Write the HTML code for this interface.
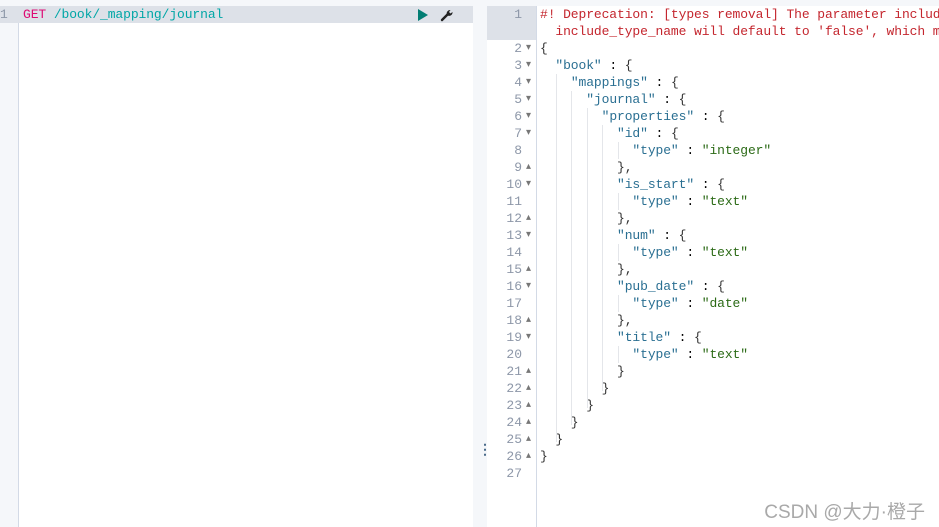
<!DOCTYPE html><html><head><style>
body{margin:0;width:939px;height:527px;background:#f5f7fa;position:relative;overflow:hidden;font-family:"Liberation Mono",monospace;font-size:13px}
.p{position:absolute;background:#fff}
.ln{position:absolute;color:#8d97a8;text-align:right;width:34px}
.c{position:absolute;white-space:pre;left:53px;letter-spacing:-0.1px}
.k{color:#2a6f92}.s{color:#2b6a16}.b{color:#333}.r{color:#c4262e}
.g{position:absolute;width:1px;background:#e4e6ea}
.a{font-size:10px;line-height:10px;color:#777;position:absolute;left:39px;font-family:"DejaVu Sans",sans-serif}
#r{position:absolute;left:487px;top:0;width:452px;height:527px;overflow:hidden}
</style></head><body>
<div class="p" style="left:19px;top:6px;width:454px;height:521px"></div>
<div style="position:absolute;left:0;top:6px;width:18px;height:521px;background:#f5f7fa;border-right:1px solid #d3dae6"></div>
<div style="position:absolute;left:0;top:6px;width:473px;height:17px;background:#dde1e8"></div>
<div style="position:absolute;left:0;top:6px;color:#8d97a8;line-height:17px">1</div>
<div style="position:absolute;left:23px;top:6px;line-height:17px;white-space:pre;letter-spacing:-0.1px"><span style="color:#dd0a73">GET</span> <span style="color:#00a6a6">/book/_mapping/journal</span></div>
<svg style="position:absolute;left:417px;top:9px" width="12" height="12"><path d="M1 0L11 6L1 12Z" fill="#017d73"/></svg>
<svg style="position:absolute;left:440px;top:8px" width="14" height="14"><path d="M2 12L7.5 6.5" stroke="#222" stroke-width="2.4" stroke-linecap="round"/><path d="M7 7a3.5 3.5 0 0 1 3.5-5l-1.5 2 1.5 1.5 2-1.5a3.5 3.5 0 0 1-5 3.5z" fill="#222"/></svg>
<div style="position:absolute;left:478px;top:442px;color:#4a6b8a;font-size:14px;font-weight:bold">⋮</div>
<div class="p" style="left:487px;top:6px;width:452px;height:521px"></div>
<div style="position:absolute;left:536px;top:6px;width:1px;height:521px;background:#d3dae6"></div>
<div style="position:absolute;left:487px;top:6px;width:49px;height:34px;background:#dde1e8"></div>
<div id="r"></div>
<div style="position:absolute;right:14px;top:497px;font:19px 'Liberation Sans','Noto Sans CJK SC',sans-serif;color:#a9a9a9">CSDN @大力·橙子</div>
<script>
var L=[
'<span class="r">#! Deprecation: [types removal] The parameter include_type_name should be explicitly specified</span>',
'<span class="b">{</span>',
'  <span class="k">"book"</span> : <span class="b">{</span>',
'    <span class="k">"mappings"</span> : <span class="b">{</span>',
'      <span class="k">"journal"</span> : <span class="b">{</span>',
'        <span class="k">"properties"</span> : <span class="b">{</span>'];
var f=[['id','integer'],['is_start','text'],['num','text'],['pub_date','date'],['title','text']];
f.forEach(function(x,i){L.push('          <span class="k">"'+x[0]+'"</span> : <span class="b">{</span>');L.push('            <span class="k">"type"</span> : <span class="s">"'+x[1]+'"</span>');L.push('          <span class="b">}'+(i<4?',':'')+'</span>');});
['        }','      }','    }','  }','}',''].forEach(function(x){L.push('<span class="b">'+x+'</span>')});
var h='';
var fold={2:'▾',3:'▾',4:'▾',5:'▾',6:'▾',7:'▾',10:'▾',13:'▾',16:'▾',19:'▾',9:'▴',12:'▴',15:'▴',18:'▴',21:'▴',22:'▴',23:'▴',24:'▴',25:'▴',26:'▴'};
for(var n=1;n<=27;n++){var y=n==1?6:40+(n-2)*17;
h+='<div class="ln" style="left:1px;top:'+y+'px;line-height:17px">'+n+'</div>';
if(fold[n])h+='<div class="a" style="top:'+(y+3)+'px">'+fold[n]+'</div>';
h+='<div class="c" style="top:'+y+'px;line-height:17px">'+L[n-1]+'</div>';}
h+='<div class="c" style="top:23px;line-height:17px"><span class="r">  include_type_name will default to \'false\', which means</span></div>';
var gs=[[556,74,442],[571,91,425],[587,108,408],[602,125,391],[618,142,159],[618,193,210],[618,244,261],[618,295,312],[618,346,363]];
gs.forEach(function(g){h+='<div class="g" style="left:'+(g[0]-487)+'px;top:'+g[1]+'px;height:'+(g[2]-g[1])+'px"></div>'});
document.getElementById('r').innerHTML=h;
</script>
</body></html>
